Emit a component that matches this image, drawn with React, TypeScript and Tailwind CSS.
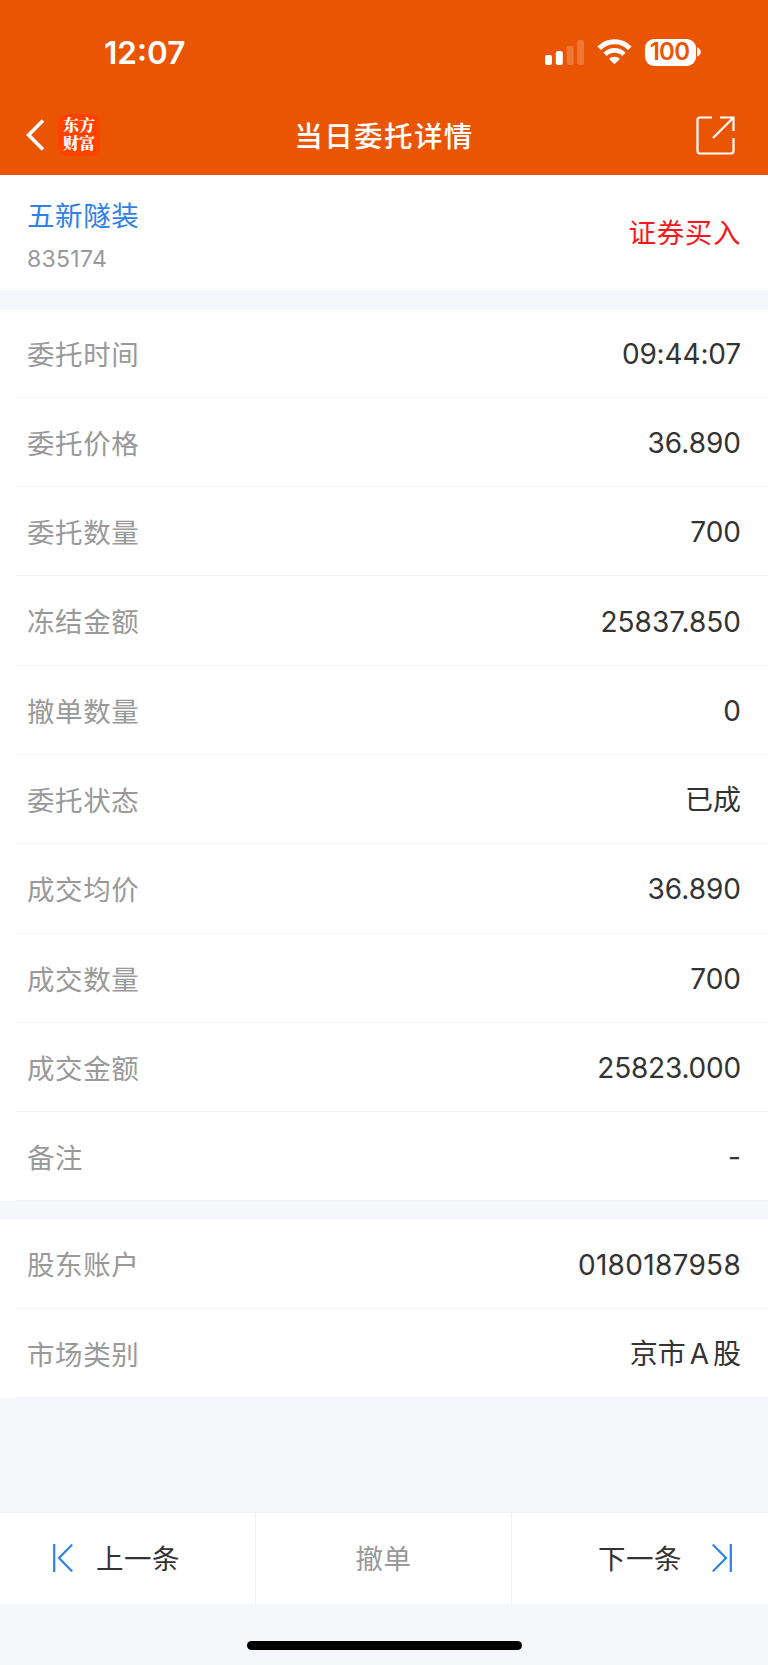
import { ReactNode } from "react";
import clsx from "clsx";

interface Field {
  label: string;
  value: ReactNode;
  className?: string;
}

const orderFields: Field[] = [
  { label: "委托时间", value: "09:44:07", className: "tracking-[-0.15px]" },
  { label: "委托价格", value: "36.890" },
  { label: "委托数量", value: "700" },
  { label: "冻结金额", value: "25837.850" },
  { label: "撤单数量", value: "0" },
  { label: "委托状态", value: "已成" },
  { label: "成交均价", value: "36.890" },
  { label: "成交数量", value: "700" },
  { label: "成交金额", value: "25823.000", className: "tracking-[-0.2px]" },
  { label: "备注", value: "-" },
];

const accountFields: Field[] = [
  { label: "股东账户", value: "0180187958", className: "tracking-[0.3px]" },
  {
    label: "市场类别",
    value: (
      <>
        京市<span className="mx-[4px]">A</span>股
      </>
    ),
  },
];

function StatusBar() {
  return (
    <div className="flex h-[104px] items-center justify-between pl-[104px] pr-[67px]">
      <span className="pt-[2px] text-[31.5px] font-semibold leading-none text-white">12:07</span>
      <div className="flex items-center gap-[13px]">
        <svg width="39" height="25" viewBox="0 0 39 25" fill="white">
          <rect x="0" y="15" width="7" height="10" rx="2" />
          <rect x="10.8" y="11" width="7" height="14" rx="2" />
          <rect x="21.6" y="6" width="7" height="19" rx="2" opacity="0.2" />
          <rect x="32.2" y="0" width="7" height="25" rx="2" opacity="0.2" />
        </svg>
        <svg width="35" height="26" viewBox="0 0 35 26" fill="none" stroke="white">
          <path d="M2.2 9.2C10.8 0.7 24.2 0.7 32.8 9.2" strokeWidth="5" />
          <path d="M8 15.4C13.2 10.1 21.8 10.1 27 15.4" strokeWidth="4.8" />
          <path d="M17.5 25.3L12.1 19.9C15.1 17.1 19.9 17.1 22.9 19.9Z" fill="white" stroke="none" />
        </svg>
        <div className="flex items-center gap-[1px]">
          <div className="flex h-[27px] w-[51px] items-center justify-center rounded-[9px] bg-white pr-[2px] text-[24px] font-semibold leading-none tracking-[-0.7px] text-[#ea5504]">
            100
          </div>
          <svg width="4" height="10" viewBox="0 0 4 10" fill="white">
            <path d="M0 0.5C5 2 5 8 0 9.5Z" />
          </svg>
        </div>
      </div>
    </div>
  );
}

function NavBar() {
  return (
    <div className="grid h-[70px] grid-cols-[1fr_auto_1fr] items-center px-[26px] pb-[7px]">
      <div className="flex items-center gap-[13px] pb-px">
        <svg width="19" height="32" viewBox="0 0 19 32" fill="none" stroke="white" strokeWidth="3.6">
          <path d="M17 1.5L2.6 16L17 30.5" />
        </svg>
        <div className="flex h-[42px] w-[42px] items-center justify-center rounded-[9px] bg-[#ff4200]">
          <span className="pb-[2px] font-['Noto_Serif_CJK_SC','Noto_Sans_CJK_SC',serif] text-[16px] font-black leading-[18px] text-white">
            东方
            <br />
            财富
          </span>
        </div>
      </div>
      <h1 className="pt-[3px] text-[28.5px] font-medium leading-none tracking-[1.4px] text-white">当日委托详情</h1>
      <svg className="mr-[7px] justify-self-end" width="39" height="39" viewBox="0 0 39 39" fill="none" stroke="white" strokeWidth="2.2">
        <path d="M16 1.5H4Q1.5 1.5 1.5 4V35Q1.5 37.5 4 37.5H35Q37.5 37.5 37.5 35V22" />
        <path d="M24 1.5H37.5V15M37 2L17 22" />
      </svg>
    </div>
  );
}

function FieldList({ fields }: { fields: Field[] }) {
  return (
    <dl className="bg-white">
      {fields.map((f) => (
        <div key={f.label} className="ml-4 flex h-[89.3px] items-center justify-between border-b border-[#f4f4f6] pl-[11px] pr-[27px]">
          <dt className="pt-[5px] text-[27.5px] tracking-[0.6px] text-[#999]">{f.label}</dt>
          <dd className={clsx("pt-[2px] text-[28px] text-[#333]", f.className)}>{f.value}</dd>
        </div>
      ))}
    </dl>
  );
}

function FooterButton({ children, className }: { children: ReactNode; className?: string }) {
  return (
    <button className={clsx("flex h-full items-center text-[27.5px] tracking-[0.5px]", className)}>
      {children}
    </button>
  );
}

export default function App() {
  return (
    <div className="flex h-[1665px] w-[768px] flex-col overflow-hidden bg-[#f6f7fa] font-['Inter','Noto_Sans_CJK_SC',sans-serif]">
      <header className="h-[174.5px] shrink-0 bg-[#ea5504]">
        <StatusBar />
        <NavBar />
      </header>

      <section className="flex h-[116px] shrink-0 items-center justify-between bg-white px-[27px]">
        <div className="flex flex-col pt-[9px]">
          <span className="text-[27.5px] leading-[40px] tracking-[0.6px] text-[#2f80e8]">五新隧装</span>
          <span className="mt-[3px] text-[23px] leading-[40px] tracking-[0.3px] text-[#999]">835174</span>
        </div>
        <span className="pt-[3px] text-[27.5px] tracking-[0.6px] text-[#f5191d]">证券买入</span>
      </section>

      <div className="h-[18px] shrink-0 border-y border-[#f1f2f4]" />
      <FieldList fields={orderFields} />
      <div className="h-[18px] shrink-0 border-b border-[#f1f2f4]" />
      <FieldList fields={accountFields} />

      <footer className="mt-auto shrink-0">
        <nav className="grid h-[91.5px] grid-cols-3 divide-x divide-[#f1f2f4] border-t border-[#f1f2f4] bg-white">
          <FooterButton className="gap-[23px] pl-[53px] text-[#333]">
            <svg width="20" height="28" viewBox="0 0 20 28" fill="none" stroke="#2f80e8" strokeWidth="2.2">
              <path d="M1.2 0V28M19.2 0.6L6 14L19.2 27.4" />
            </svg>
            <span className="pt-[3px]">上一条</span>
          </FooterButton>
          <FooterButton className="justify-center pt-[3px] text-[#999]">撤单</FooterButton>
          <FooterButton className="justify-end gap-[30px] pr-[36px] text-[#333]">
            <span className="pt-[3px]">下一条</span>
            <svg width="20" height="28" viewBox="0 0 20 28" fill="none" stroke="#2f80e8" strokeWidth="2.2">
              <path d="M18.8 0V28M0.8 0.6L14 14L0.8 27.4" />
            </svg>
          </FooterButton>
        </nav>
        <div className="flex h-[61.5px] justify-center pt-[37.5px]">
          <div className="h-[9px] w-[275px] rounded-full bg-black" />
        </div>
      </footer>
    </div>
  );
}
